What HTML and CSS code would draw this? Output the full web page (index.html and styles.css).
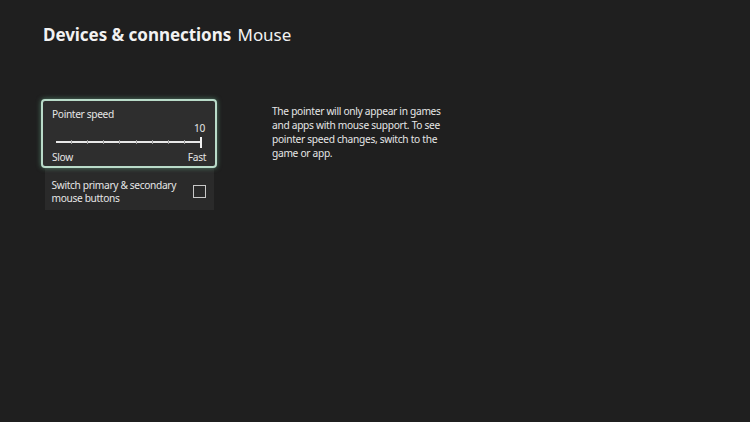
FILE: index.html
```html
<!DOCTYPE html>
<html lang="en">
<head>
    <meta charset="UTF-8">
    <title>Mouse</title>
    <link rel="stylesheet" href="styles.css">
</head>
<body>
    <header class="page-title">
        <h1><strong>Devices &amp; connections</strong> Mouse</h1>
    </header>

    <main class="content">
        <div class="settings">
            <!-- focused slider card -->
            <div class="card card-focus">
                <div class="card-label">Pointer speed</div>
                <div class="slider-value">10</div>
                <div class="slider">
                    <div class="track">
                        <span class="tick"></span><span class="tick"></span><span class="tick"></span>
                        <span class="tick"></span><span class="tick"></span><span class="tick"></span>
                        <span class="tick"></span><span class="tick"></span>
                    </div>
                    <div class="thumb"></div>
                </div>
                <div class="slider-ends">
                    <span>Slow</span>
                    <span>Fast</span>
                </div>
            </div>

            <div class="card card-check">
                <div class="card-label">Switch primary &amp; secondary mouse buttons</div>
                <div class="checkbox"></div>
            </div>
        </div>

        <p class="note">The pointer will only appear in games and apps with mouse support. To see pointer speed changes, switch to the game or app.</p>
    </main>
</body>
</html>
```

FILE: styles.css
```css
body {
    margin: 0;
    background-color: #1f1f1f;
    color: #f2f2f2;
    font-family: 'Noto Sans', 'Open Sans', sans-serif;
    width: 750px;
    height: 422px;
    overflow: hidden;
}
.page-title {
    padding: 22px 0 0 43px;
}
.page-title h1 {
    margin: 0;
    font-size: 17px;
    font-weight: normal;
    line-height: 26px;
    letter-spacing: -0.05px;
}
.page-title strong {
    font-weight: bold;
    margin-right: 2px;
}
.content {
    display: flex;
    margin-top: 51px;
    padding-left: 41px;
}
.settings {
    width: 176px;
    display: flex;
    flex-direction: column;
    align-items: center;
}
.card {
    box-sizing: border-box;
    background-color: #2b2b2b;
    font-size: 10.2px;
    letter-spacing: -0.35px;
    color: #e6e6e6;
}
.card-focus {
    width: 176px;
    height: 69px;
    border: 2px solid #b9dbc9;
    border-radius: 4px;
    box-shadow: 0 0 5px rgba(120, 200, 160, 0.55);
    background-color: #2e2e2e;
    padding: 7px 9px 0 9px;
    position: relative;
    z-index: 1;
}
.card-label {
    line-height: 13px;
}
.slider-value {
    text-align: right;
    line-height: 13px;
    margin-top: 1px;
    padding-right: 1px;
}
.slider {
    display: flex;
    align-items: center;
    height: 14px;
    margin: 0 4px 0 4px;
}
.track {
    flex: 1;
    height: 2px;
    background-color: #e8e8e8;
    display: flex;
    align-items: center;
    justify-content: space-evenly;
}
.tick {
    width: 1px;
    height: 4px;
    background-color: #9a9a9a;
}
.thumb {
    width: 2px;
    height: 11px;
    background-color: #f0f0f0;
}
.slider-ends {
    display: flex;
    justify-content: space-between;
    line-height: 13px;
    margin-top: 2px;
}
.card-check {
    width: 169px;
    height: 42px;
    background-color: #2a2a2a;
    display: flex;
    align-items: center;
    justify-content: space-between;
    padding: 5px 8px 0 7px;
}
.card-check .card-label {
    width: 135px;
    line-height: 12.5px;
}
.checkbox {
    box-sizing: border-box;
    width: 13px;
    height: 13px;
    border: 1.5px solid #c8c8c8;
}
.note {
    margin: 5px 0 0 55px;
    width: 176px;
    font-size: 10.2px;
    letter-spacing: -0.3px;
    line-height: 14px;
    color: #e6e6e6;
}
```
